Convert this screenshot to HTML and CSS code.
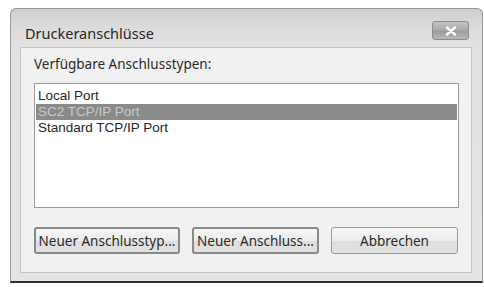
FILE: index.html
```html
<!DOCTYPE html>
<html lang="de">
<head>
<meta charset="utf-8">
<title>Druckeranschlüsse</title>
<link rel="stylesheet" href="styles.css">
</head>
<body>
<div class="window">
  <div class="titlebar">
    <span class="title">Druckeranschlüsse</span>
    <span class="close"><svg width="14" height="10" viewBox="0 0 14 10"><path d="M3 1.5 L11 8.5 M11 1.5 L3 8.5" stroke="#fff" stroke-width="2.4" stroke-linecap="round"/></svg></span>
  </div>
  <div class="client">
    <div class="label">Verfügbare Anschlusstypen:</div>
    <ul class="listbox">
      <li class="item">Local Port</li>
      <li class="item selected">SC2 TCP/IP Port</li>
      <li class="item">Standard TCP/IP Port</li>
    </ul>
    <div class="buttons">
      <button class="btn btn-dark btn-1">Neuer Anschlusstyp...</button>
      <button class="btn btn-dark btn-2">Neuer Anschluss...</button>
      <button class="btn btn-3">Abbrechen</button>
    </div>
  </div>
</div>
</body>
</html>
```

FILE: styles.css
```css
html, body {
  margin: 0;
  padding: 0;
  background: #ffffff;
}
body {
  padding: 8px 0 0 10px;
  font-family: "Noto Sans", "DejaVu Sans", sans-serif;
  font-size: 13.5px;
  color: #2a2a2a;
}
.window {
  box-sizing: border-box;
  width: 473px;
  height: 275px;
  display: flex;
  flex-direction: column;
  border: 1px solid #9a9a9a;
  border-bottom: 2px solid #2e2e2e;
  border-radius: 6px 6px 0 0;
  background: linear-gradient(to bottom, #cfcfcf 0px, #dcdcdc 20px, #e2e2e2 40px, #e4e4e4 100%);
  padding: 0 10px 8px 9px;
}
.titlebar {
  height: 38px;
  display: flex;
  align-items: center;
  justify-content: space-between;
  padding: 0 3px 0 5px;
}
.title {
  font-size: 14.5px;
  color: #262626;
  margin-top: 9px;
}
.close {
  box-sizing: border-box;
  width: 37px;
  height: 19px;
  margin-top: 5px;
  border: 1px solid #8c8c8c;
  border-radius: 3px;
  background: linear-gradient(to bottom, #c4c4c4, #a8a8a8 50%, #9a9a9a 51%, #b8b8b8);
  display: flex;
  align-items: center;
  justify-content: center;
}
.client {
  flex: 1;
  display: flex;
  flex-direction: column;
  background: #f1f1f1;
  border: 1px solid #c4c4c4;
  padding: 6px 12px 0 13px;
}
.label {
  height: 20px;
  line-height: 20px;
  color: #2a2a2a;
}
.listbox {
  list-style: none;
  margin: 9px 0 0 0;
  padding: 4px 1px 2px;
  height: 125px;
  box-sizing: border-box;
  background: #ffffff;
  border: 1px solid #9c9c9c;
}
.item {
  height: 16px;
  line-height: 16px;
  padding-left: 2px;
  font-family: "Liberation Sans", Arial, sans-serif;
  font-size: 13.5px;
  color: #262626;
}
.item.selected {
  background: #8a8a8a;
  color: #c9c9c9;
}
.buttons {
  display: flex;
  gap: 12px;
  margin-top: 19px;
}
.btn {
  box-sizing: border-box;
  height: 27px;
  font-family: inherit;
  font-size: 13.5px;
  color: #2a2a2a;
  border: 1px solid #9a9a9a;
  border-radius: 3px;
  background: linear-gradient(to bottom, #f6f6f6, #ececec 50%, #dedede 51%, #e2e2e2);
  padding: 0;
  white-space: nowrap;
}
.btn-dark {
  border: 2px solid #8a8a8a;
}
.btn-1 { width: 146px; }
.btn-2 { width: 127px; }
.btn-3 { width: 127px; }
```
